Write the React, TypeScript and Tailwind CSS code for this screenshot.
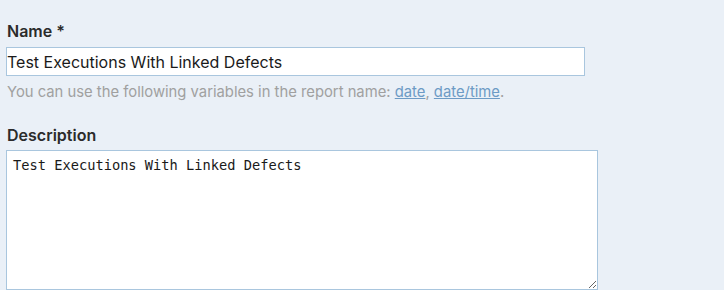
export default function App() {
  return (
    <div className="min-h-[290px] w-[724px] overflow-hidden bg-[#eaf0f7] px-[6px] pt-[21px] font-['Inter','Noto_Sans',sans-serif]">
      <div className="w-[579px]">
        <label className="mb-[6px] block pl-px text-[16px] font-semibold leading-[20px] text-[#2b2b2b]">
          Name *
        </label>
        <input
          type="text"
          defaultValue="Test Executions With Linked Defects"
          className="block h-[29px] w-full border border-[#a9c6de] bg-white px-0 text-[16px] text-[#1a1a1a] outline-none"
        />
        <p className="mt-[7px] pl-px text-[14.8px] leading-[18px] text-[#a0a0a0]">
          You can use the following variables in the report name:{' '}
          <a href="#" className="text-[#6d9bc5] underline">date</a>,{' '}
          <a href="#" className="text-[#6d9bc5] underline">date/time</a>.
        </p>
      </div>
      <label className="mb-[5px] mt-[24px] block pl-px text-[16px] font-semibold leading-[20px] text-[#2b2b2b]">
        Description
      </label>
      <textarea
        defaultValue="Test Executions With Linked Defects"
        className="block h-[140px] w-[592px] border border-[#a9c6de] bg-white px-[6px] py-[6px] font-['DejaVu_Sans_Mono',monospace] text-[13.7px] leading-[17px] text-[#1a1a1a] outline-none"
      />
    </div>
  );
}
